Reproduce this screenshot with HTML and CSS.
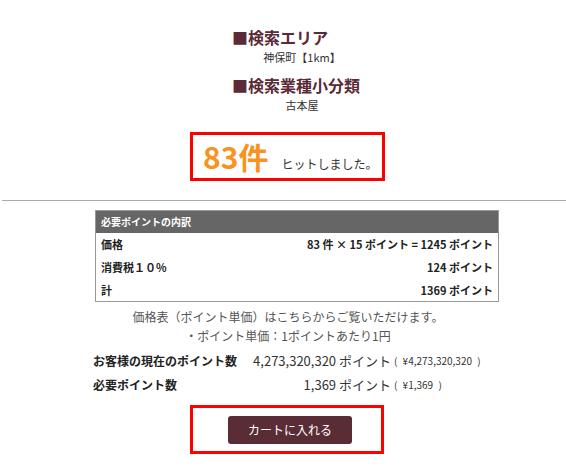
FILE: index.html
```html
<!DOCTYPE html>
<html lang="ja">
<head>
    <meta charset="UTF-8">
    <title>検索結果</title>
    <link rel="stylesheet" href="styles.css">
</head>
<body>
    <div class="search-info">
        <h3 class="search-title">■検索エリア</h3>
        <p class="search-value">神保町【1km】</p>
        <h3 class="search-title">■検索業種小分類</h3>
        <p class="search-value">古本屋</p>
    </div>

    <div class="hit-box">
        <span class="hit-count">83件</span>
        <span class="hit-text">ヒットしました。</span>
    </div>

    <hr class="divider">

    <table class="point-table">
        <tr>
            <th colspan="2">必要ポイントの内訳</th>
        </tr>
        <tr>
            <td>価格</td>
            <td class="num">83 件 × 15 ポイント = 1245 ポイント</td>
        </tr>
        <tr>
            <td>消費税１０%</td>
            <td class="num">124 ポイント</td>
        </tr>
        <tr>
            <td>計</td>
            <td class="num">1369 ポイント</td>
        </tr>
    </table>

    <div class="price-note">
        <p>価格表（ポイント単価）はこちらからご覧いただけます。</p>
        <p>・ポイント単価：1ポイントあたり1円</p>
    </div>

    <div class="point-summary">
        <span class="label">お客様の現在のポイント数</span>
        <span class="value">4,273,320,320 ポイント</span>
        <span class="yen">( ¥4,273,320,320 )</span>
        <span class="label">必要ポイント数</span>
        <span class="value">1,369 ポイント</span>
        <span class="yen">( ¥1,369 )</span>
    </div>

    <div class="cart-box">
        <button class="cart-btn">カートに入れる</button>
    </div>
</body>
</html>
```

FILE: styles.css
```css
* {
    margin: 0;
    padding: 0;
    box-sizing: border-box;
}
body {
    font-family: "Noto Sans CJK JP", "Noto Sans", sans-serif;
    color: #333;
    background: #fff;
    padding-top: 27px;
    width: 566px;
}
.search-info {
    margin-left: 232px;
    width: 140px;
}
.search-title {
    font-size: 16px;
    line-height: 20px;
    font-weight: bold;
    color: #5a2a37;
    white-space: nowrap;
}
.search-title + .search-value + .search-title {
    margin-top: 8px;
}
.search-value {
    font-size: 11px;
    line-height: 20px;
    text-align: center;
    color: #333;
}
.hit-box {
    margin: 17px 0 0 190px;
    width: 195px;
    height: 49px;
    border: 3px solid #f00;
    display: flex;
    align-items: baseline;
    padding-left: 10px;
    line-height: 43px;
    white-space: nowrap;
}
.hit-count {
    font-size: 30px;
    font-weight: bold;
    color: #f7931e;
}
.hit-text {
    margin-left: 13px;
    font-size: 12px;
    color: #333;
}
.divider {
    margin: 19px 0 0 2px;
    border: none;
    border-top: 1px solid #aaa;
}
.point-table {
    margin: 9px 0 0 95px;
    width: 404px;
    border-collapse: collapse;
    border: 1px solid #999;
    font-size: 11px;
    font-weight: bold;
}
.point-table th {
    background: #666;
    color: #fff;
    text-align: left;
    height: 22px;
    padding-left: 5px;
    font-size: 10px;
}
.point-table td {
    height: 23px;
    padding: 0 5px;
    color: #222;
}
.point-table td.num {
    text-align: right;
}
.price-note {
    margin-top: 5px;
    padding-left: 10px;
    text-align: center;
    font-size: 12px;
    color: #555;
}
.price-note p {
    line-height: 19px;
}
.point-summary {
    margin: 3px 0 0 93px;
    display: grid;
    grid-template-columns: 150px 148px auto;
    grid-auto-rows: 24px;
    align-items: center;
    font-size: 12px;
    white-space: nowrap;
}
.point-summary .label {
    font-weight: bold;
    color: #222;
}
.point-summary .value {
    text-align: right;
    font-size: 13px;
}
.point-summary .yen {
    font-size: 10px;
    padding-left: 3px;
    word-spacing: 3px;
}
.cart-box {
    margin: 9px 0 0 190px;
    width: 194px;
    height: 49px;
    border: 3px solid #f00;
    display: flex;
    justify-content: center;
    align-items: center;
    padding-left: 6px;
}
.cart-btn {
    width: 124px;
    height: 28px;
    background: #5a2c36;
    color: #fff;
    border: none;
    border-radius: 3px;
    font-family: inherit;
    font-size: 12px;
}
```
